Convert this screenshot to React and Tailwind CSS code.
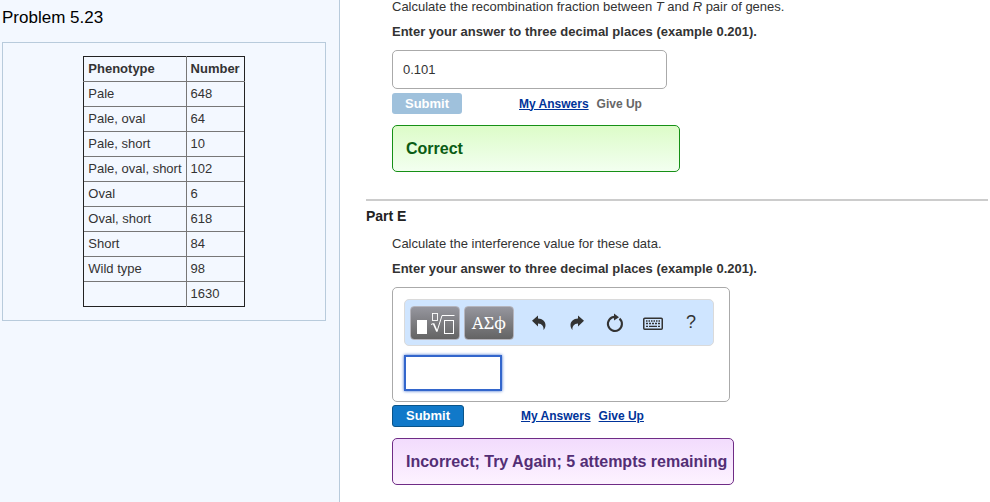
import React, { useState } from "react";

const phenotypes = [
  { name: "Pale", count: "648" },
  { name: "Pale, oval", count: "64" },
  { name: "Pale, short", count: "10" },
  { name: "Pale, oval, short", count: "102" },
  { name: "Oval", count: "6" },
  { name: "Oval, short", count: "618" },
  { name: "Short", count: "84" },
  { name: "Wild type", count: "98" },
  { name: "", count: "1630" },
];

// Toolbar icons
const TemplateIcon = () => (
  <svg width="40" height="24" viewBox="0 0 40 24" fill="none" stroke="#fff" aria-hidden="true">
    <rect x="2" y="9" width="10" height="14" fill="#fff" stroke="none" />
    <rect x="17.5" y="2.5" width="5" height="7" strokeWidth="0.9" />
    <path d="M16 13.500l2.500-1" />
    <path d="M18.500 12.500l3.500 8" strokeWidth="1.800" />
    <path d="M22 20.500L27 4.500H39.500" />
    <rect x="29.500" y="9.500" width="9" height="13" />
  </svg>
);

const UndoIcon = () => (
  <svg width="14" height="16" viewBox="0 0 14 16" fill="#333" aria-hidden="true">
    <path d="M0 5.800L6 0.500V3.500C10.500 3.700 13.500 6.500 13.500 10c0 2-.7 3.600-2 5C12 11.500 10 8.600 6 8.500v3z" />
  </svg>
);

const RedoIcon = () => (
  <svg width="14" height="16" viewBox="0 0 14 16" fill="#333" aria-hidden="true">
    <path d="M14 5.800L8 0.500V3.500C3.500 3.700.5 6.500.5 10c0 2 .7 3.600 2 5C2 11.500 4 8.600 8 8.500v3z" />
  </svg>
);

const ResetIcon = () => (
  <svg width="18" height="20" viewBox="0 0 18 20" fill="none" aria-hidden="true">
    <path d="M13.500 5.600A7 7 0 1 1 9 3.900" stroke="#333" strokeWidth="2.100" />
    <path d="M8 0.500L13 4.200 8 7.500z" fill="#333" />
  </svg>
);

const KeyboardIcon = () => (
  <svg width="20" height="15" viewBox="0 0 20 15" fill="none" stroke="#333" aria-hidden="true">
    <rect x="0.750" y="3.250" width="18.500" height="11" rx="1" strokeWidth="1.500" />
    <path d="M3 6h14" strokeWidth="1.300" strokeDasharray="1.500 1" />
    <path d="M3 8.500h14" strokeWidth="1.300" strokeDasharray="2 1" />
    <path d="M3 11.300h2M6 11.300h8M15 11.300h2" strokeWidth="1.300" />
  </svg>
);

const Instructions = ({ id, children }) => (
  <div className="flex flex-col gap-[11px] leading-[14px]">
    <p>{children}</p>
    <label htmlFor={id} className="font-bold">
      Enter your answer to three decimal places (example 0.201).
    </label>
  </div>
);

const linkClass = "text-[#003399] underline";
const toolClass =
  "flex h-[34px] w-[50px] items-center justify-center rounded border border-[#b5b5bd] bg-linear-to-b from-[#96969e] to-[#646464] text-white";
const iconClass = "flex h-6 w-6 items-center justify-center";

const App = () => {
  const [answer, setAnswer] = useState("");

  return (
    <div className="flex min-h-screen bg-white font-['Liberation_Sans',Arial,sans-serif] text-[13px] text-[#333]">
      <aside className="w-[340px] shrink-0 border-r border-[#b8cbdc] bg-[#f3f8ff] pt-2 pr-[13px] pl-[2px]">
        <h1 className="text-[17px] leading-5 text-black">Problem 5.23</h1>
        <div className="mt-[14px] flex justify-center border border-[#b8cbdc] py-[13px]">
          <table className="border-collapse border border-[#222] text-left leading-4">
            <thead>
              <tr className="h-[25px]">
                <th className="border border-[#777] border-t-[#222] border-l-[#222] px-1">Phenotype</th>
                <th className="border border-[#777] border-t-[#222] border-r-[#222] px-1">Number</th>
              </tr>
            </thead>
            <tbody>
              {phenotypes.map(({ name, count }) => (
                <tr key={count} className="h-[25px] last:border-b last:border-[#222]">
                  <td className="border-x border-t border-[#777] border-l-[#222] px-1">{name}</td>
                  <td className="border-x border-t border-[#777] border-r-[#222] px-1">{count}</td>
                </tr>
              ))}
            </tbody>
          </table>
        </div>
      </aside>

      <main className="min-w-0 flex-1 pr-[2px] pl-[26px]">
        {/* Part D */}
        <section className="pl-[26px]">
          <Instructions id="recombination">
            Calculate the recombination fraction between <i>T</i> and <i>R</i> pair of genes.
          </Instructions>
          <input
            id="recombination"
            type="text"
            value="0.101"
            readOnly
            className="mt-[11px] block h-[39px] w-[275px] rounded-[5px] border border-[#aaa] px-[10px] outline-none"
          />
          <div className="mt-1 flex items-center text-[12px] font-bold">
            <button
              type="button"
              disabled
              className="h-[21px] w-[70px] rounded-[3px] bg-[#9fc1dc] text-[13px] leading-5 text-white"
            >
              Submit
            </button>
            <a href="#answers-d" className={`ml-[57px] ${linkClass}`}>My Answers</a>
            <span className="ml-2 text-[#666]">Give Up</span>
          </div>
          <div className="mt-[11px] flex h-[47px] w-[288px] items-center rounded-[5px] border border-[#169016] bg-linear-to-b from-[#dcfcc8] to-[#f3fff0] px-[13px] text-[16px] font-bold text-[#0a5c14]">
            Correct
          </div>
        </section>

        <hr className="mt-[27px] border-t-2 border-[#ccc]" />

        {/* Part E */}
        <h2 className="mt-[7px] text-[14px] leading-4 font-bold text-[#222]">Part E</h2>
        <section className="mt-[13px] pl-[26px]">
          <Instructions id="interference">
            Calculate the interference value for these data.
          </Instructions>
          <div className="mt-[11px] h-[115px] w-[338px] rounded-[5px] border border-[#aaa] p-[11px]">
            <div className="flex h-[47px] w-[310px] items-center rounded-[5px] border border-[#dadada] bg-[#cfe5ff] px-[5px]">
              <button type="button" aria-label="Templates" className={toolClass}>
                <TemplateIcon />
              </button>
              <button
                type="button"
                aria-label="Symbols"
                className={`ml-1 font-['Noto_Serif','Liberation_Serif',serif] text-[17px] ${toolClass}`}
              >
                ΑΣϕ
              </button>
              <div className="ml-[13px] flex gap-[14px]">
                <button type="button" aria-label="Undo" className={iconClass}><UndoIcon /></button>
                <button type="button" aria-label="Redo" className={iconClass}><RedoIcon /></button>
                <button type="button" aria-label="Reset" className={iconClass}><ResetIcon /></button>
                <button type="button" aria-label="Keyboard" className={iconClass}><KeyboardIcon /></button>
                <button type="button" aria-label="Help" className={`text-[18px] ${iconClass}`}>?</button>
              </div>
            </div>
            <input
              id="interference"
              type="text"
              value={answer}
              onChange={(e) => setAnswer(e.target.value)}
              className="mt-[9px] block h-9 w-[98px] border-2 border-[#3366cc] px-2 shadow-[0_0_3px_#3366cc] outline-none"
            />
          </div>
          <div className="mt-[3px] flex items-center text-[12px] font-bold">
            <button
              type="button"
              className="h-[22px] w-[72px] rounded-[3px] border border-[#0a5489] bg-[#1179c9] text-[13px] leading-5 text-white"
            >
              Submit
            </button>
            <a href="#answers-e" className={`ml-[57px] ${linkClass}`}>My Answers</a>
            <a href="#give-up" className={`ml-2 ${linkClass}`}>Give Up</a>
          </div>
          <div className="mt-[11px] flex h-[47px] w-[342px] items-center rounded-[5px] border border-[#6f2c86] bg-linear-to-b from-[#f2dcfd] to-[#fdf2ff] px-[13px] text-[16px] font-bold whitespace-nowrap text-[#532e75]">
            Incorrect; Try Again; 5 attempts remaining
          </div>
        </section>
      </main>
    </div>
  );
};

export default App;
